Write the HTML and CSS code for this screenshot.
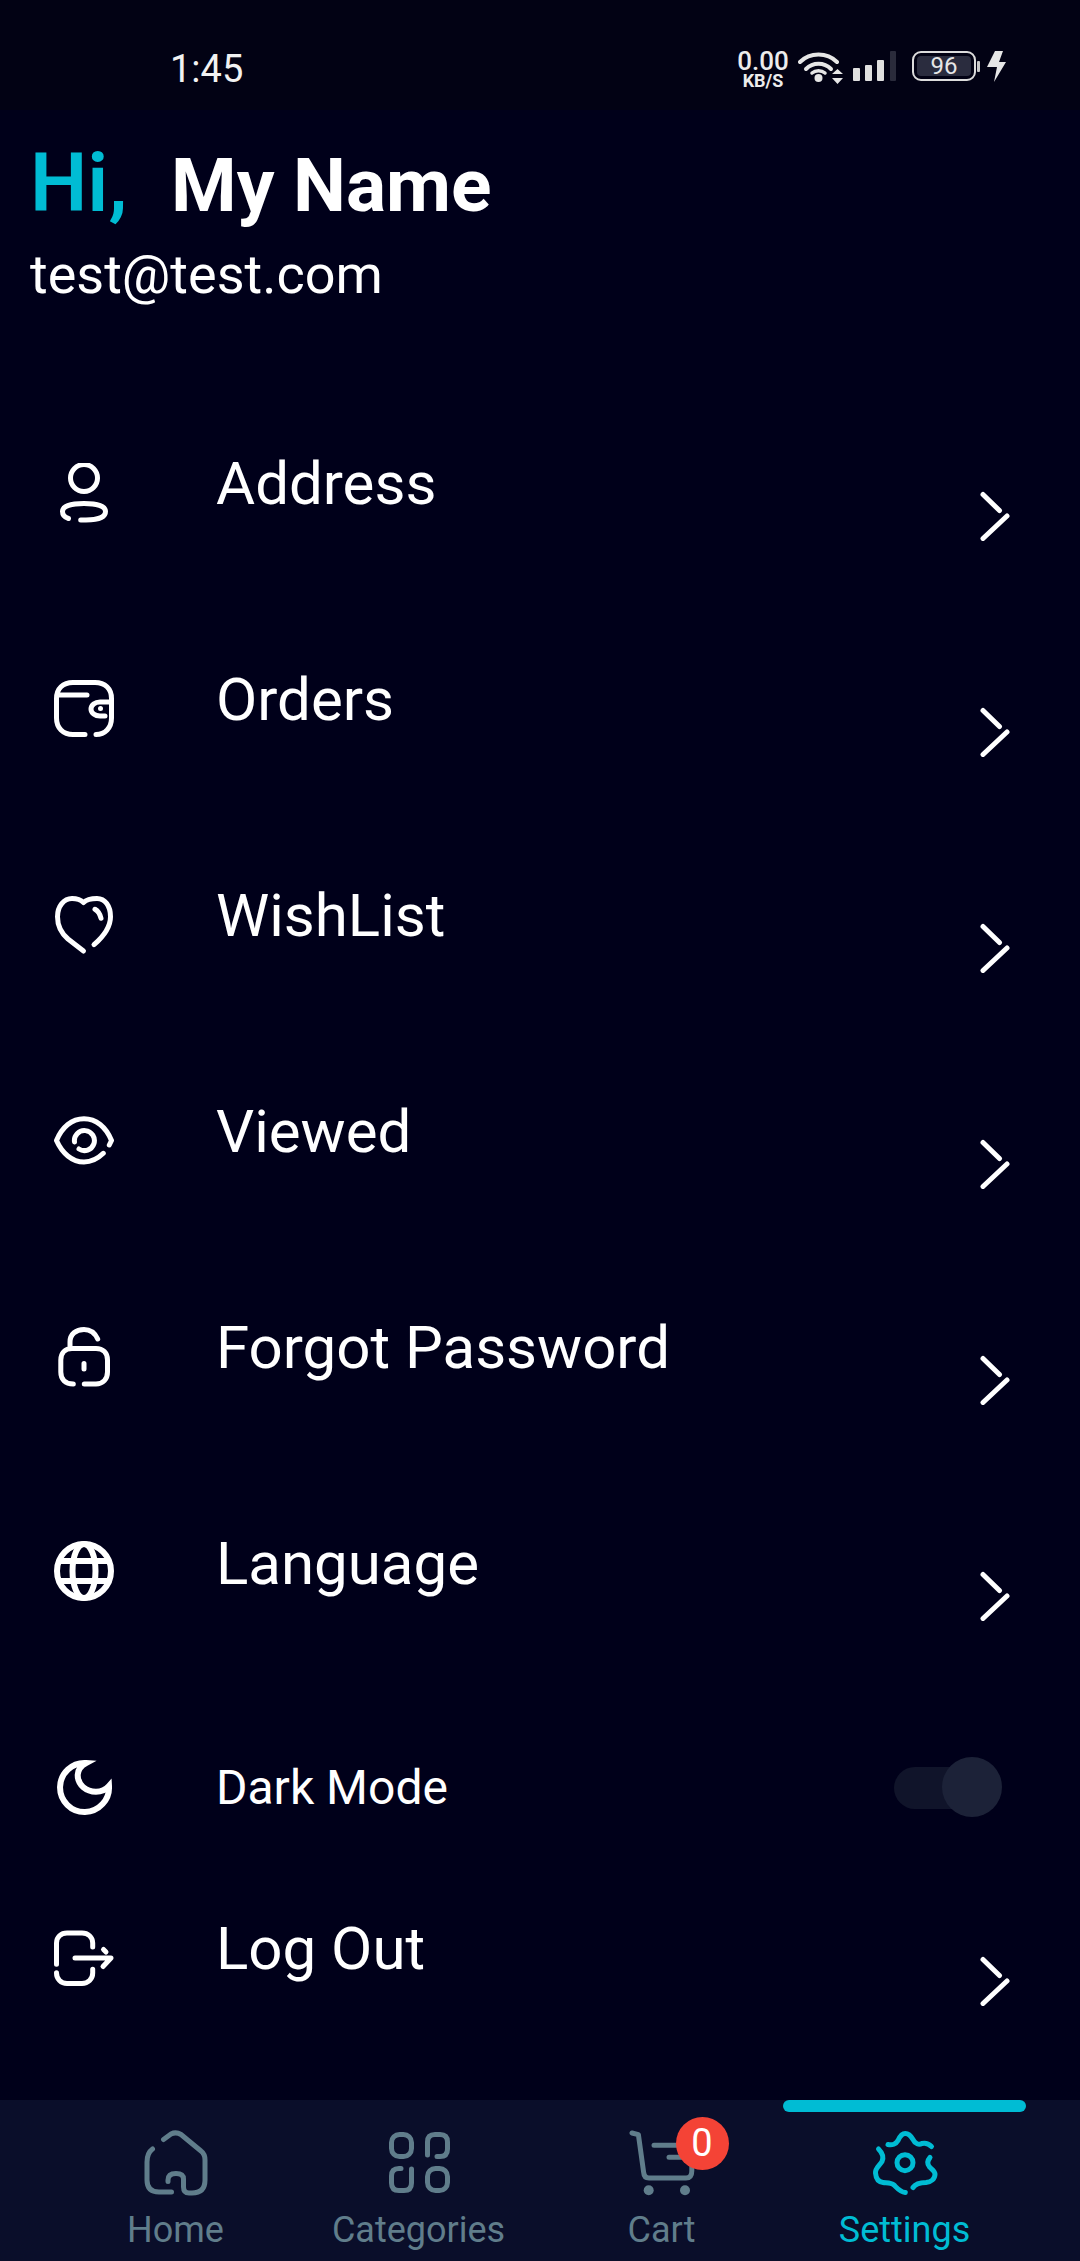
FILE: index.html
```html
<!DOCTYPE html>
<html lang="en">
<head>
<meta charset="utf-8">
<title>Settings</title>
<link rel="stylesheet" href="styles.css">
</head>
<body>
<div class="screen">
  <div class="status">
    <span class="time">1:45</span>
    <div class="status-right">
      <div class="speed"><span class="speed-num">0.00</span><span class="speed-unit">KB/S</span></div>
      <svg class="wifi" width="46" height="34" viewBox="0 0 46 34"><g fill="none" stroke="#e6e6e6" stroke-width="4" stroke-linecap="round"><path d="M2 11C12 1 29 1 39 11"/><path d="M8 18C15 11 26 11 33 18"/></g><circle cx="20.500" cy="27" r="4" fill="#e6e6e6"/><path d="M14 22C17.500 19 23.500 19 27 22" fill="none" stroke="#e6e6e6" stroke-width="3.500" stroke-linecap="round"/><path d="M34 23h11l-5.500-5zM34 27h11l-5.500 6z" fill="#e6e6e6"/></svg>
      <svg class="signal" width="44" height="30" viewBox="0 0 44 30"><rect x="0" y="17" width="7" height="13" rx="1" fill="#e0e0e0"/><rect x="12" y="14" width="7" height="16" rx="1" fill="#e0e0e0"/><rect x="24" y="9" width="7" height="21" rx="1" fill="#e0e0e0"/><rect x="37" y="0" width="6" height="30" rx="1" fill="#2a2b3b"/></svg>
      <div class="battery"><div class="battery-fill">96</div></div>
      <span class="battery-nub"></span>
      <svg class="bolt" width="20" height="31" viewBox="0 0 20 31"><path d="M9 0h8l-4 11h7L8 31l3-15H1z" fill="#e6e6e6"/></svg>
    </div>
  </div>

  <header class="greeting">
    <h1 class="hello"><span class="hi">Hi,</span><span class="name">My Name</span></h1>
    <p class="email">test@test.com</p>
  </header>

  <ul class="menu">
    <li class="row">
      <svg class="icon" viewBox="0 0 60 60"><circle cx="30" cy="15" r="13.500"/><path d="M26.700 57H32C44 57 51.500 54 51.500 48.500C51.500 43 42 40.500 30 40.500C18 40.500 8.500 43 8.500 48.500C8.500 52 11 54.500 14.500 55.500"/></svg>
      <span class="label">Address</span>
      <svg class="chevron" viewBox="0 0 36 50"><path d="M6 3.500L22.500 19.500M30 25L6 47.500"/></svg>
    </li>
    <li class="row">
      <svg class="icon" viewBox="0 0 60 60"><path d="M31 55.500H19C9 55.500 2.500 49 2.500 39V19.500C2.500 9.500 9 3.500 19 3.500H41C51 3.500 57.500 9.500 57.500 19.500V39C57.500 49 51 55.500 42 55.500M4 16H33M55 23H46C41 23 37 26 37 30C37 34 41 37 46 37H51"/><circle class="dot" cx="46.500" cy="29.500" r="2.500"/></svg>
      <span class="label">Orders</span>
      <svg class="chevron" viewBox="0 0 36 50"><path d="M6 3.500L22.500 19.500M30 25L6 47.500"/></svg>
    </li>
    <li class="row">
      <svg class="icon" viewBox="0 0 60 60"><path d="M29.500 56L14 44C6 37 3.500 29 3.500 21.700C3.500 11 10 3.500 18 3.500C23 3.500 27 5 29.500 7.500C32 5 37 3.500 43 3.500C51 3.500 56.500 11 56.500 21.700C56.500 32 50 41 40 49.700M41 14.300C44 16 46 19 47 23.300"/></svg>
      <span class="label">WishList</span>
      <svg class="chevron" viewBox="0 0 36 50"><path d="M6 3.500L22.500 19.500M30 25L6 47.500"/></svg>
    </li>
    <li class="row">
      <svg class="icon" viewBox="0 0 60 60"><path d="M55.300 34L57.500 29.500C52 16 42 7.700 30 7.700C18 7.700 8 16 2.500 29.500C8 42 18 51 30 51C38 51 44 47.500 49.300 42.300M20.500 31A10 10 0 1 1 25 38"/></svg>
      <span class="label">Viewed</span>
      <svg class="chevron" viewBox="0 0 36 50"><path d="M6 3.500L22.500 19.500M30 25L6 47.500"/></svg>
    </li>
    <li class="row">
      <svg class="icon" viewBox="0 0 60 60"><path d="M30.300 57H42C49 57 53.500 52 53.500 45V33C53.500 26 49 21.500 42 21.500H18C11 21.500 6.800 26 6.800 33V45C6.800 52 11 57 19.300 57M16 19V15C16 7 22 2.500 30 2.500C36 2.500 41 6 43.700 12M30 36.500V42"/></svg>
      <span class="label">Forgot Password</span>
      <svg class="chevron" viewBox="0 0 36 50"><path d="M6 3.500L22.500 19.500M30 25L6 47.500"/></svg>
    </li>
    <li class="row">
      <svg class="icon icon-globe" viewBox="0 0 60 60"><circle cx="30" cy="30" r="27"/><ellipse cx="30" cy="30" rx="11.500" ry="27"/><path class="butt" d="M4 20H56M4 40H56"/></svg>
      <span class="label">Language</span>
      <svg class="chevron" viewBox="0 0 36 50"><path d="M6 3.500L22.500 19.500M30 25L6 47.500"/></svg>
    </li>
    <li class="row row-dark">
      <svg class="icon" viewBox="0 0 60 60"><path class="miter" d="M32 5A24.500 24.500 0 1 0 55 28C48 36 36 35 29 29C22 22 21 11 32 5Z"/></svg>
      <span class="label-small">Dark Mode</span>
      <div class="switch"><span class="thumb"></span></div>
    </li>
    <li class="row">
      <svg class="icon" viewBox="0 0 60 60"><path d="M38.700 19V15C38.700 9 34 5 28 5H13C7 5 2.500 9 2.500 15V36.300M2.500 44.700V45C2.500 51 7 55.500 13 55.500H28C34 55.500 38.700 51 38.700 45V41.300M21 30H57L49 38.500M49.500 21.500L52 24"/></svg>
      <span class="label">Log Out</span>
      <svg class="chevron" viewBox="0 0 36 50"><path d="M6 3.500L22.500 19.500M30 25L6 47.500"/></svg>
    </li>
  </ul>

  <nav class="tabs">
    <div class="tab">
      <svg class="tab-icon" viewBox="0 0 66 66"><path d="M20.500 9.500L28 4Q33 1.500 38 4.500L58 21Q62 24 62 30V50Q62 63 49 63H46Q40.500 63 40.500 57V49Q40.500 43.500 33 43.500Q25 43.500 25 50V51.500M28.500 62H16Q4 62 4 50V32Q4 23 9.500 19"/></svg>
      <span class="tab-label">Home</span>
    </div>
    <div class="tab">
      <svg class="tab-icon" viewBox="0 0 66 66"><rect x="5.500" y="4.500" width="20" height="22" rx="8"/><rect x="41.500" y="38.500" width="20" height="22" rx="8"/><path d="M41.500 25V12Q41.500 4.500 49 4.500H54Q61.500 4.500 61.500 12V19Q61.500 26.500 54 26.500H51M15 38.500H13Q5.500 38.500 5.500 46V53Q5.500 60.500 13 60.500H18Q25.500 60.500 25.500 53V39"/></svg>
      <span class="tab-label">Categories</span>
    </div>
    <div class="tab">
      <div class="cart-wrap">
        <svg class="tab-icon" viewBox="0 0 66 66"><path d="M3 3L9.400 4.700L14.600 42Q15 48 20 48H57Q62.800 48 62.800 41V28M25 15.300H49M40 27.300H52.500"/><circle class="dot-nav" cx="19.700" cy="60.300" r="5"/><circle class="dot-nav" cx="56" cy="60.300" r="5"/></svg>
        <span class="badge">0</span>
      </div>
      <span class="tab-label">Cart</span>
    </div>
    <div class="tab tab-active">
      <span class="indicator"></span>
      <svg class="tab-icon" viewBox="0 0 66 66"><circle cx="33" cy="32.700" r="8"/><path d="M16 14.500C20 15.500 24 14 26 10.500C28 6 30 3.500 33.300 3.500C37 3.500 39 6 41 9.500C43 14 47 15 50 13.500C54 12.500 57 14 59.500 16.500M58 27.500C55 31 55 34 57.500 37C60 39.500 63 41 63 44C63 49 59 52 54 52.500C49 52.500 44 53 41 57.500M6.500 19C10.500 23 12 27 10 31.500C8 35 3 38 3.500 43C4 49 7 52 11 52.500C15 53 19 52.500 22 55C25 58 28 62 33.300 62.500"/></svg>
      <span class="tab-label">Settings</span>
    </div>
  </nav>
</div>
</body>
</html>
```

FILE: styles.css
```css
* { box-sizing: border-box; }
html, body { margin: 0; padding: 0; background: #00001a; }
body { font-family: Roboto, "Liberation Sans", sans-serif; color: #fff; }
.screen { width: 1080px; height: 2261px; display: flex; flex-direction: column; overflow: hidden; background: #00001a; }

.status { height: 110px; flex: none; background: #020214; display: flex; align-items: flex-start; padding: 47px 74px 0 170px; justify-content: space-between; }
.time { font-size: 38px; line-height: 45px; color: #f2f2f2; }
.status-right { display: flex; align-items: flex-start; height: 40px; margin-top: 5px; }
.speed { display: flex; flex-direction: column; align-items: center; width: 54px; margin-top: -4px; color: #ececec; }
.speed-num { font-size: 26px; line-height: 26px; font-weight: 500; }
.speed-unit { font-size: 18px; line-height: 14px; font-weight: 700; }
.wifi { margin-left: 8px; margin-top: -1px; }
.signal { margin-left: 9px; margin-top: -1px; }
.battery { width: 64px; height: 30px; margin-left: 15px; margin-top: -1px; border: 2px solid #dcdcdc; border-radius: 9px; padding: 3px; }
.battery-fill { height: 20px; background: #2a2c3e; border-radius: 4px; color: #e6e6e6; font-size: 24px; line-height: 20px; text-align: center; }
.battery-nub { width: 3px; height: 11px; background: #c8c8c8; margin-top: 9px; margin-left: 1px; border-radius: 1px; }
.bolt { margin-left: 6px; margin-top: -1px; }

.greeting { flex: none; height: 275px; padding: 27px 0 0 30px; }
.hello { margin: 0; height: 76px; font-size: 81px; line-height: 94px; display: flex; align-items: baseline; }
.hi { color: #00bcd4; font-weight: 600; width: 141px; }
.name { font-size: 75px; font-weight: 700; color: #fff; }
.email { margin: 30px 0 0; font-size: 54px; line-height: 63px; color: #fff; }

.menu { list-style: none; margin: 0; padding: 0; }
.row { height: 216px; display: grid; grid-template-columns: 60px 1fr 36px; column-gap: 102px; padding: 0 67px 0 54px; align-items: center; }
.row-dark { height: 169px; padding-top: 44px; column-gap: 102px; grid-template-columns: 60px 1fr 108px; padding-right: 78px; }
.icon { width: 60px; height: 60px; display: block; fill: none; stroke: #fff; stroke-width: 5; stroke-linecap: round; stroke-linejoin: round; }
.icon .dot { fill: #fff; stroke: none; }
.icon .butt { stroke-linecap: butt; stroke-width: 6; }
.icon .miter { stroke-linejoin: miter; stroke-miterlimit: 12; stroke-width: 6; }
.icon-globe { stroke-width: 6; margin-top: -4px; }
.label { font-size: 60px; line-height: 70px; margin-top: -19px; }
.label-small { font-size: 48px; line-height: 56px; }
.chevron { width: 36px; height: 50px; display: block; margin-top: 46px; fill: none; stroke: #fff; stroke-width: 5; stroke-linecap: round; }

.switch { position: relative; width: 90px; height: 42px; border-radius: 21px; background: #10142a; }
.thumb { position: absolute; left: 48px; top: -10px; width: 60px; height: 60px; border-radius: 50%; background: #1c2238; }

.tabs { margin-top: auto; flex: none; height: 161px; background: #0a0e2a; display: grid; grid-template-columns: repeat(4, 243px); padding: 0 54px; }
.tab { position: relative; display: flex; flex-direction: column; align-items: center; padding-top: 30px; color: #607d8b; }
.tab-active { color: #00bcd4; }
.indicator { position: absolute; top: 0; left: 0; right: 0; height: 12px; border-radius: 6px; background: #00bcd4; }
.tab-icon { width: 66px; height: 66px; display: block; fill: none; stroke: currentColor; stroke-width: 5; stroke-linecap: round; stroke-linejoin: round; }
.dot-nav { fill: currentColor; stroke: none; }
.tab-label { font-size: 36px; line-height: 42px; margin-top: 13px; }
.cart-wrap { position: relative; }
.badge { position: absolute; left: 47px; top: -13px; width: 53px; height: 53px; border-radius: 50%; background: #f44336; color: #fff; font-size: 38px; line-height: 53px; text-align: center; }
```
